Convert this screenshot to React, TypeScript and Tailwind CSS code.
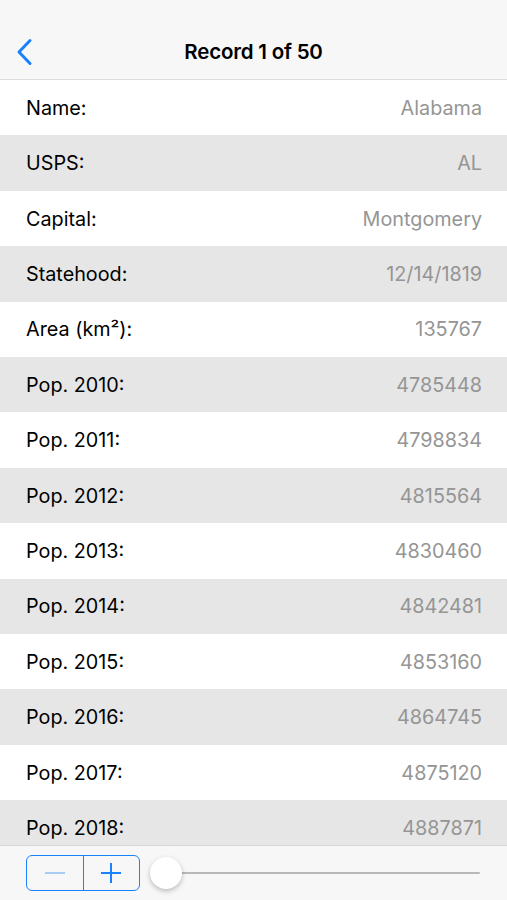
const rows: [string, string][] = [
  ["Name:", "Alabama"],
  ["USPS:", "AL"],
  ["Capital:", "Montgomery"],
  ["Statehood:", "12/14/1819"],
  ["Area (km²):", "135767"],
  ["Pop. 2010:", "4785448"],
  ["Pop. 2011:", "4798834"],
  ["Pop. 2012:", "4815564"],
  ["Pop. 2013:", "4830460"],
  ["Pop. 2014:", "4842481"],
  ["Pop. 2015:", "4853160"],
  ["Pop. 2016:", "4864745"],
  ["Pop. 2017:", "4875120"],
  ["Pop. 2018:", "4887871"],
];

export default function App() {
  return (
    <div
      className="relative flex h-[900px] w-[507px] flex-col overflow-hidden bg-white"
      style={{ fontFamily: "Inter, 'Noto Sans', sans-serif" }}
    >
      <header className="flex h-[80px] shrink-0 items-end border-b border-[#dcdcdc] bg-[#f7f7f7] pb-[12px]">
        <div className="relative flex h-[30px] w-full items-center justify-center">
          <svg className="absolute left-[14px] top-[1px]" width="22" height="28" viewBox="0 0 22 28" fill="none">
            <path d="M16 2.5 L5 14 L16 25.5" stroke="#1a82fb" strokeWidth="3" strokeLinecap="round" strokeLinejoin="round" />
          </svg>
          <h1 className="text-[20.5px] font-semibold tracking-[-0.2px] text-black">Record 1 of 50</h1>
        </div>
      </header>

      <div className="flex-1">
        {rows.map(([label, value], i) => (
          <div
            key={label}
            className={`flex h-[55.4px] items-center justify-between pl-[26px] pr-[25px] pt-[2px] ${
              i % 2 === 1 ? "bg-[#e6e6e6]" : "bg-white"
            }`}
          >
            <span className="text-[19.8px] text-black">{label}</span>
            <span className="text-[19.8px] text-[#959595]">{value}</span>
          </div>
        ))}
      </div>

      <footer className="absolute bottom-0 left-0 flex h-[55px] w-full items-center gap-[10px] border-t border-[#d8d8d8] bg-[#f7f7f7] pl-[26px] pr-[27px]">
        <div className="flex h-[36px] w-[114px] overflow-hidden rounded-[6px] border border-[#1a82fb]">
          <button className="flex flex-1 items-center justify-center border-r border-[#1a82fb]">
            <span className="h-[2px] w-[20px] bg-[#a9ccf5]" />
          </button>
          <button className="relative flex flex-1 items-center justify-center">
            <span className="absolute h-[2px] w-[20px] bg-[#1a82fb]" />
            <span className="absolute h-[20px] w-[2px] bg-[#1a82fb]" />
          </button>
        </div>
        <div className="relative flex h-[34px] flex-1 items-center">
          <div className="h-[2px] w-full rounded-full bg-[#b8b8b8]" />
          <div className="absolute left-0 h-[32px] w-[32px] rounded-full bg-white shadow-[0_2px_5px_rgba(0,0,0,0.25)]" />
        </div>
      </footer>
    </div>
  );
}
